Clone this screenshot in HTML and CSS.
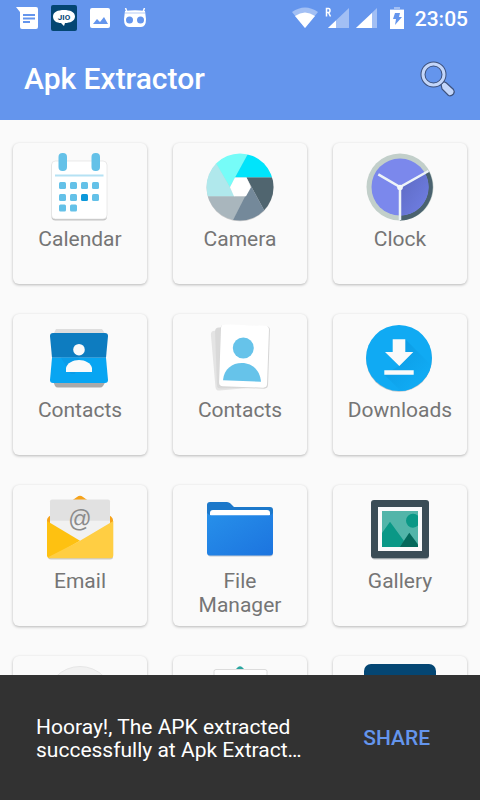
FILE: index.html
```html
<!DOCTYPE html>
<html lang="en">
<head>
<meta charset="utf-8">
<meta name="viewport" content="width=device-width, initial-scale=1">
<title>Apk Extractor</title>
<link rel="stylesheet" href="styles.css">
</head>
<body>
<header class="header">
  <div class="status">
    <div class="notices">
      <svg width="22" height="24" viewBox="0 0 22 24"><path fill="#fff" d="M0 1h20q2 0 2 2v18q0 2-2 2H6q-2 0-2-2V6z"/><path stroke="#6495ed" stroke-width="2" d="M7 9h12M7 12.500h12M7 16h7"/></svg>
      <svg width="26" height="26" viewBox="0 0 26 26"><rect width="26" height="26" rx="2" fill="#044673"/><path fill="#fff" d="M13 5c6 0 11 2 11 6.500S19 18 14 18l-1 3-3-3C6 18 2 16 2 11.500S7 5 13 5z"/><text class="jio" x="13" y="15" text-anchor="middle">JIO</text></svg>
      <svg width="20" height="20" viewBox="0 0 20 20"><rect width="20" height="20" rx="2" fill="#fff"/><path fill="#6495ed" d="M3 16l4-5 3 3 4-5 4 7z"/></svg>
      <svg width="24" height="20" viewBox="0 0 24 20"><path fill="none" stroke="#fff" stroke-width="1.500" d="M2.500 0L4 4M21.500 0L20 4"/><path fill="#fff" d="M2 3q10-1.500 20 0l1 8q0 8-5 8H6q-5 0-5-8z"/><path stroke="#b5cbf5" stroke-width="1" d="M2 5h20"/><circle cx="6.500" cy="12" r="3.500" fill="#6495ed"/><circle cx="17.500" cy="12" r="3.500" fill="#6495ed"/></svg>
    </div>
    <div class="system">
      <svg width="26" height="22" viewBox="0 0 26 22"><path fill="#a2bff4" d="M0 5q13-9 26 0L13 21z"/><path fill="#fff" d="M3 9q10-7 20 0L13 21z"/></svg>
      <svg width="24" height="22" viewBox="0 0 24 22"><path fill="#a2bff4" d="M24 1v20H3z"/><path fill="#fff" d="M11 13.500V21H3z"/><path fill="none" stroke="#fff" stroke-width="1.500" d="M1.500 9.500V1.500h2q1.500 0 1.500 2t-1.500 2h-2M3.500 5.500l2 4"/></svg>
      <svg width="21" height="22" viewBox="0 0 21 22"><path fill="#a2bff4" d="M21 1v20H0z"/><path fill="#fff" d="M16 6v15H0z"/></svg>
      <svg width="14" height="22" viewBox="0 0 14 22"><path fill="#a2bff4" d="M4 0h6v2h4v2H0V2h4z"/><path fill="#fff" d="M0 3h14v19H0z"/><path fill="#6495ed" d="M5 6h5l-1 4h3l-7 8 1-6H3z"/></svg>
      <time class="time">23:05</time>
    </div>
  </div>
  <div class="appbar">
    <h1 class="title">Apk Extractor</h1>
    <button class="search" type="button" aria-label="Search">
      <svg width="36" height="37" viewBox="0 0 36 37"><path fill="#c3d6fa" stroke="#3d517c" stroke-width="1.200" d="M21 23l2.500-2.500 3 1.500 7 6.500q1.500 2 0 4.500-2.500 2.500-5 1.500L22 28z"/><circle cx="13.500" cy="13.500" r="10.500" fill="none" stroke="#3d517c" stroke-width="5"/><circle cx="13.500" cy="13.500" r="10.500" fill="none" stroke="#c3d6fa" stroke-width="3"/></svg>
    </button>
  </div>
</header>

<main class="apps">
  <button class="card" type="button">
    <svg class="icon" viewBox="0 0 72 72"><rect x="7.500" y="11" width="55.500" height="58.500" rx="4" fill="#c4c4c4"/><rect x="7.500" y="10" width="55.500" height="58" rx="4" fill="#fff" stroke="#ddd" stroke-width=".6"/><path stroke="#b5e2f4" stroke-width="2" d="M11 24.500h48.500"/><g fill="#64c1e8"><rect x="14.500" y="2" width="8.500" height="18" rx="4"/><rect x="47.500" y="2" width="8.500" height="18" rx="4"/><rect x="15" y="31" width="7" height="7" rx="1.500"/><rect x="26" y="31" width="7" height="7" rx="1.500"/><rect x="37" y="31" width="7" height="7" rx="1.500"/><rect x="48" y="31" width="7" height="7" rx="1.500"/><rect x="15" y="43" width="7" height="7" rx="1.500"/><rect x="26" y="43" width="7" height="7" rx="1.500"/><rect x="37" y="43" width="7" height="7" rx="1.500" fill="#0b98da"/><rect x="48" y="43" width="7" height="7" rx="1.500"/><rect x="15" y="53.500" width="7" height="7" rx="1.500"/><rect x="26" y="53.500" width="7" height="7" rx="1.500"/></g></svg>
    <span class="label">Calendar</span>
  </button>
  <button class="card" type="button">
    <svg class="icon" viewBox="0 0 72 72"><defs><clipPath id="lens"><circle cx="36" cy="36" r="33.500"/></clipPath></defs><circle cx="36" cy="36.700" r="33.500" fill="#ccc"/><g clip-path="url(#lens)"><path fill="#a9b6bd" d="M0 45.300h42L27.500 72H0z"/><path fill="#b0e8ec" d="M0 0h5l7.700 13L31 45.300H0z"/><path fill="#76fcf8" d="M5 0h40.500L26 36.300z"/><path fill="#00e4fb" d="M45.500 0H72v26.600H31z"/><path fill="#50656f" d="M42.500 26.600H72V72h-5z"/><path fill="#74899a" d="M46.700 34.500L67 72H27.500z"/></g><path fill="#fff" d="M31 26.600h11.500l4.500 9.700-5 9H30l-4-9z"/></svg>
    <span class="label">Camera</span>
  </button>
  <button class="card" type="button">
    <svg class="icon" viewBox="0 0 72 72"><defs><linearGradient id="dial" x1="0" y1="0" x2="1" y2="1"><stop offset="0" stop-color="#5d6ac2"/><stop offset="1" stop-color="#7180e6"/></linearGradient></defs><circle cx="36" cy="36" r="33.500" fill="#c2cfca"/><path fill="#4a626f" d="M36 36l29-15.500A33.500 33.500 0 0 1 36 69.500z"/><circle cx="36" cy="36" r="28.500" fill="#7b88ec"/><path fill="url(#dial)" d="M36 36l25.500-12.800A28.500 28.500 0 0 1 36 64.500z"/><path fill="none" stroke="#edf4f8" stroke-width="2.500" d="M14.300 23.300L36 36l28.500-16M36 36v33"/><circle cx="36" cy="36.500" r="2.800" fill="#f3f8fa"/></svg>
    <span class="label">Clock</span>
  </button>
  <button class="card" type="button">
    <svg class="icon" viewBox="0 0 72 72"><path fill="#dedede" d="M12 7h46l4 6H9z"/><path fill="#a9a9a9" d="M9 59h53l-3 5q-1 1.500-3 1.500H14q-2 0-3-1.500z"/><path fill="#0d7cc0" d="M6 14q0-3 3-3h52q3 0 3 3l-2 21.700H8z"/><path fill="#08a5f2" d="M8 35.700h54L64 58q0 3-3 3H9q-3 0-3-3z"/><path fill="#0b9ce8" d="M17 35.700h18L31 52h-4z"/><circle cx="35" cy="27.700" r="5.800" fill="#fafafa"/><path fill="#fafafa" d="M22 50v-4c1-5 7-8 13-8s12 3 13 8v4z"/></svg>
    <span class="label">Contacts</span>
  </button>
  <button class="card" type="button">
    <svg class="icon" viewBox="0 0 72 72"><rect x="9" y="7" width="47" height="60" rx="4" fill="#e4e4e4" transform="rotate(-5 32 36)"/><rect x="12" y="5" width="48" height="61" rx="4" fill="#d9d9d9" transform="rotate(-2 32 36)"/><rect x="15.500" y="3.500" width="49.500" height="62.500" rx="4" fill="#d6d6d6" transform="rotate(2 40 35)"/><rect x="16" y="3" width="48" height="62" rx="4" fill="#fff" transform="rotate(2 40 35)"/><circle cx="39.300" cy="26" r="10.500" fill="#66c3ea"/><path fill="#66c3ea" d="M19 58.200C20 47 28 41 38 41s18 7 19 18.700z"/></svg>
    <span class="label">Contacts</span>
  </button>
  <button class="card" type="button">
    <svg class="icon" viewBox="0 0 72 72"><defs><linearGradient id="shade" x1="0" y1="0" x2="1" y2="1"><stop offset="0" stop-color="#0b98e0"/><stop offset=".7" stop-color="#10aaf3"/></linearGradient><clipPath id="disc"><circle cx="35" cy="36" r="33"/></clipPath></defs><circle cx="35" cy="36.800" r="33" fill="#b9c4ca"/><circle cx="35" cy="36" r="33" fill="#10aaf3"/><path clip-path="url(#disc)" fill="url(#shade)" d="M41.300 17.300L72 48v24H40L20.300 52.700 35 44z"/><path fill="#fafafa" d="M28.700 17.300h12.600V30h8L35.300 44 21 30h7.700zM20.300 48.300h29.400v4.400H20.300z"/></svg>
    <span class="label">Downloads</span>
  </button>
  <button class="card" type="button">
    <svg class="icon" viewBox="0 0 72 72"><path fill="#f6a31b" d="M3 27q0-2 2-3.500L33 4q3-2.500 6 0l28 19.500q2 1.500 2 3.500v12H3z"/><path fill="#e1e1e1" d="M6 8.500q0-2 2-2h56q2 0 2 2V30L36 48 6 30z"/><path fill="#f1f1f1" d="M6 27.700h60V31L36 49 6 31z"/><path fill="#ccc" d="M4 63h65v1q0 2.500-3 2.500H7q-3 0-3-2.500z"/><path fill="#fec111" d="M3 28l33 19.700L6 65.300q-3 0-3-3z"/><path fill="#ffce43" d="M69.300 28v34.300q0 3-3 3H6q-1 0-2-1L36 47.700z"/><text class="at" x="36" y="34" text-anchor="middle">@</text></svg>
    <span class="label">Email</span>
  </button>
  <button class="card" type="button">
    <svg class="icon" viewBox="0 0 72 72"><defs><linearGradient id="folder" x1="0" y1="0" x2="1" y2="1"><stop offset="0" stop-color="#2790ea"/><stop offset="1" stop-color="#1c74df"/></linearGradient></defs><rect x="3.500" y="30" width="65.500" height="33.500" rx="3" fill="#c2c8d0"/><path fill="#1c78ca" d="M3 12q0-3 3-3h17q2 0 3.500 1.500L30 14h36q3 0 3 3v14H3z"/><path fill="#fff" d="M6 25v-5q0-3 3-3h54q3 0 3 3v5z"/><path fill="url(#folder)" d="M3 20q2 2.300 4 2.300h58q2 0 4-2.300v39.500q0 3-3 3H6q-3 0-3-3z"/></svg>
    <span class="label">File Manager</span>
  </button>
  <button class="card" type="button">
    <svg class="icon" viewBox="0 0 72 72"><rect x="7.500" y="8" width="57.500" height="58.500" rx="3" fill="#c0c4c6"/><rect x="7" y="7" width="58" height="58.300" rx="3" fill="#3b4d56"/><path fill="#fafafa" d="M14 14h44v44H14z"/><path fill="#52b5a9" d="M18 18h36v36H18z"/><path fill="#0a9886" d="M54 22.800v9.800a7 7 0 1 1 0-9.800zM18 40l8-11.300L40 48l-4.300 6H18z"/><path fill="#04695b" d="M35.700 54l9.600-14.300L54 51.500V54z"/></svg>
    <span class="label">Gallery</span>
  </button>
  <button class="card" type="button" aria-label="App">
    <svg class="icon" viewBox="0 0 72 72"><circle cx="36" cy="36" r="33.500" fill="#f1f1f1" stroke="#e6e6e6" stroke-width="1"/></svg>
  </button>
  <button class="card" type="button" aria-label="App">
    <svg class="icon" viewBox="0 0 72 72"><path fill="#2ba6a0" d="M30 7l4-4q2-1.500 4 0l4 4z"/><rect x="10" y="5.500" width="53" height="60" rx="2" fill="#fff" stroke="#dcdcdc" stroke-width="1"/></svg>
  </button>
  <button class="card" type="button" aria-label="App">
    <svg class="icon" viewBox="0 0 72 72"><rect width="72" height="72" rx="7" fill="#044673"/></svg>
  </button>
</main>

<footer class="snackbar" role="status">
  <p class="message">Hooray!, The APK extracted successfully at Apk Extract…</p>
  <button class="share" type="button">SHARE</button>
</footer>
</body>
</html>
```
FILE: styles.css
```css
* {
  box-sizing: border-box;
}

body {
  margin: 0;
  height: 100vh;
  display: flex;
  flex-direction: column;
  background: #fafafa;
  color: #757575;
  font-family: Roboto, "Liberation Sans", sans-serif;
  font-size: 21px;
  line-height: 24px;
}

button {
  border: 0;
  background: none;
  color: inherit;
  font: inherit;
}

svg {
  display: block;
  flex: none;
}

.header {
  background: #6495ed;
  color: #fff;
}

.status {
  display: flex;
  justify-content: space-between;
  align-items: center;
  height: 36px;
  padding: 0 12px 0 16px;
}

.notices {
  display: flex;
  align-items: center;
  gap: 13px;
}

.system {
  display: flex;
  align-items: center;
  gap: 7px;
}

.time {
  padding-top: 2px;
  margin-left: 4px;
  font-weight: 500;
}

.system svg:nth-of-type(4) {
  margin-left: 6px;
}

.jio {
  fill: #044673;
  font-size: 8px;
  font-weight: 700;
}

.appbar {
  display: flex;
  justify-content: space-between;
  align-items: center;
  height: 84px;
  padding: 2px 24px 0;
}

.title {
  margin: 0;
  font-size: 30px;
  line-height: 36px;
  font-weight: 500;
}

.search {
  padding: 0;
}

.apps {
  flex: 1;
  min-height: 0;
  overflow: hidden;
  display: grid;
  grid-template-columns: repeat(3, 1fr);
  grid-auto-rows: max-content;
  gap: 30px 26px;
  padding: 23px 13px 0;
}

.card {
  display: flex;
  flex-direction: column;
  align-items: center;
  justify-content: flex-start;
  gap: 4px;
  min-height: 141px;
  padding: 8px 12px;
  border-radius: 6px;
  background: #fafafa;
  box-shadow: 0 1px 3px rgba(0, 0, 0, 0.27);
}

.icon {
  width: 72px;
  height: 72px;
}

.at {
  fill: #8b8b8b;
  font-family: "Liberation Sans", sans-serif;
  font-size: 23px;
}

.label {
  text-align: center;
}

.snackbar {
  display: flex;
  justify-content: space-between;
  align-items: center;
  gap: 24px;
  min-height: 125px;
  padding: 36px;
  background: #323232;
  color: #fff;
}

.message {
  max-width: 272px;
  margin: 0;
  padding-top: 2px;
  line-height: 23px;
}

.share {
  padding: 0 14px;
  color: #6495ed;
  font-weight: 500;
}
```
